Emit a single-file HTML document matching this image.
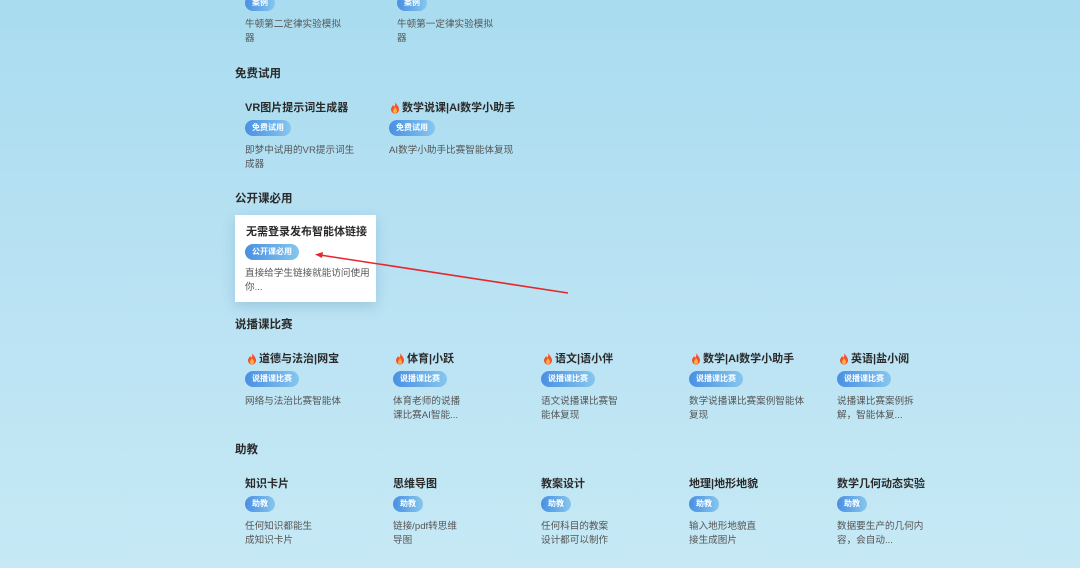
<!DOCTYPE html>
<html><head><meta charset="utf-8"><style>
*{margin:0;padding:0;box-sizing:border-box}
body{width:1080px;height:568px;overflow:hidden;position:relative;background:linear-gradient(180deg,#a9dcf0 0%,#b9e2f3 50%,#c6e9f5 100%);font-family:"Liberation Sans","Noto Sans CJK SC",sans-serif}
.h{position:absolute;left:235px;font-size:11.5px;font-weight:bold;color:#2a2a2a;line-height:14px}
.t{position:absolute;font-size:11px;font-weight:bold;color:#2a2a2a;line-height:14px;white-space:nowrap;display:flex;align-items:center}
.t svg{margin-right:2px}
.g{position:absolute;height:16px;border-radius:8px;background:linear-gradient(90deg,#4a90e2,#86c6ee);color:#fff;font-size:8px;font-weight:bold;line-height:16px;padding:0 7px;white-space:nowrap}
.d{position:absolute;font-size:9.6px;color:#555;line-height:14px;width:120px}
.card{position:absolute;left:235px;top:215px;width:141px;height:87px;background:#fff;box-shadow:0 4px 12px rgba(60,120,160,.25)}
</style></head><body>
<svg width="0" height="0" style="position:absolute"><defs><symbol id="f" viewBox="0 0 10 12"><path d="M5 0C6 2 9 4 9 7.5A4 4 0 0 1 1 7.5C1 5.5 2.5 4.5 3 3C3.5 4 4 4.5 4.5 4.5C5.5 3 5.5 1.5 5 0Z" fill="#f5502a"/><path d="M5 5C6 6.5 7 7.5 7 9A2 2 0 0 1 3 9C3 8 4 7 5 5Z" fill="#ffb23a"/></symbol></defs></svg>

<div class="g" style="left:245px;top:-5px">案例</div>
<div class="g" style="left:397px;top:-5px">案例</div>
<div class="d" style="left:245px;top:18px;width:100px">牛顿第二定律实验模拟器</div>
<div class="d" style="left:397px;top:18px;width:100px">牛顿第一定律实验模拟器</div>

<div class="h" style="top:67px">免费试用</div>
<div class="t" style="left:245px;top:101px">VR图片提示词生成器</div>
<div class="t" style="left:390px;top:101px"><svg width="10" height="12"><use href="#f"/></svg>数学说课|AI数学小助手</div>
<div class="g" style="left:245px;top:120px">免费试用</div>
<div class="g" style="left:389px;top:120px">免费试用</div>
<div class="d" style="left:245px;top:144px;width:111px">即梦中试用的VR提示词生成器</div>
<div class="d" style="left:389px;top:144px;width:140px">AI数学小助手比赛智能体复现</div>

<div class="h" style="top:192px">公开课必用</div>
<div class="card"></div>
<div class="t" style="left:246px;top:225px">无需登录发布智能体链接</div>
<div class="g" style="left:245px;top:244px">公开课必用</div>
<div class="d" style="left:245px;top:267px;width:126px">直接给学生链接就能访问使用你...</div>
<svg style="position:absolute;left:0;top:0" width="1080" height="568"><line x1="568" y1="293" x2="320" y2="255" stroke="#e8252a" stroke-width="1.6"/><path d="M315 254.5L323 252L322 258Z" fill="#e8252a"/></svg>

<div class="h" style="top:318px">说播课比赛</div>
<div class="t" style="left:247px;top:352px"><svg width="10" height="12"><use href="#f"/></svg>道德与法治|网宝</div>
<div class="t" style="left:395px;top:352px"><svg width="10" height="12"><use href="#f"/></svg>体育|小跃</div>
<div class="t" style="left:543px;top:352px"><svg width="10" height="12"><use href="#f"/></svg>语文|语小伴</div>
<div class="t" style="left:691px;top:352px"><svg width="10" height="12"><use href="#f"/></svg>数学|AI数学小助手</div>
<div class="t" style="left:839px;top:352px"><svg width="10" height="12"><use href="#f"/></svg>英语|盐小阅</div>
<div class="g" style="left:245px;top:371px">说播课比赛</div>
<div class="g" style="left:393px;top:371px">说播课比赛</div>
<div class="g" style="left:541px;top:371px">说播课比赛</div>
<div class="g" style="left:689px;top:371px">说播课比赛</div>
<div class="g" style="left:837px;top:371px">说播课比赛</div>
<div class="d" style="left:245px;top:395px;width:120px">网络与法治比赛智能体</div>
<div class="d" style="left:393px;top:395px;width:70px">体育老师的说播课比赛AI智能...</div>
<div class="d" style="left:541px;top:395px;width:80px">语文说播课比赛智能体复现</div>
<div class="d" style="left:689px;top:395px;width:119px">数学说播课比赛案例智能体复现</div>
<div class="d" style="left:837px;top:395px;width:80px">说播课比赛案例拆解，智能体复...</div>

<div class="h" style="top:443px">助教</div>
<div class="t" style="left:245px;top:477px">知识卡片</div>
<div class="t" style="left:393px;top:477px">思维导图</div>
<div class="t" style="left:541px;top:477px">教案设计</div>
<div class="t" style="left:689px;top:477px">地理|地形地貌</div>
<div class="t" style="left:837px;top:477px">数学几何动态实验</div>
<div class="g" style="left:245px;top:496px">助教</div>
<div class="g" style="left:393px;top:496px">助教</div>
<div class="g" style="left:541px;top:496px">助教</div>
<div class="g" style="left:689px;top:496px">助教</div>
<div class="g" style="left:837px;top:496px">助教</div>
<div class="d" style="left:245px;top:520px;width:70px">任何知识都能生成知识卡片</div>
<div class="d" style="left:393px;top:520px;width:70px">链接/pdf转思维导图</div>
<div class="d" style="left:541px;top:520px;width:70px">任何科目的教案设计都可以制作</div>
<div class="d" style="left:689px;top:520px;width:70px">输入地形地貌直接生成图片</div>
<div class="d" style="left:837px;top:520px;width:90px">数据要生产的几何内容，会自动...</div>
</body></html>
